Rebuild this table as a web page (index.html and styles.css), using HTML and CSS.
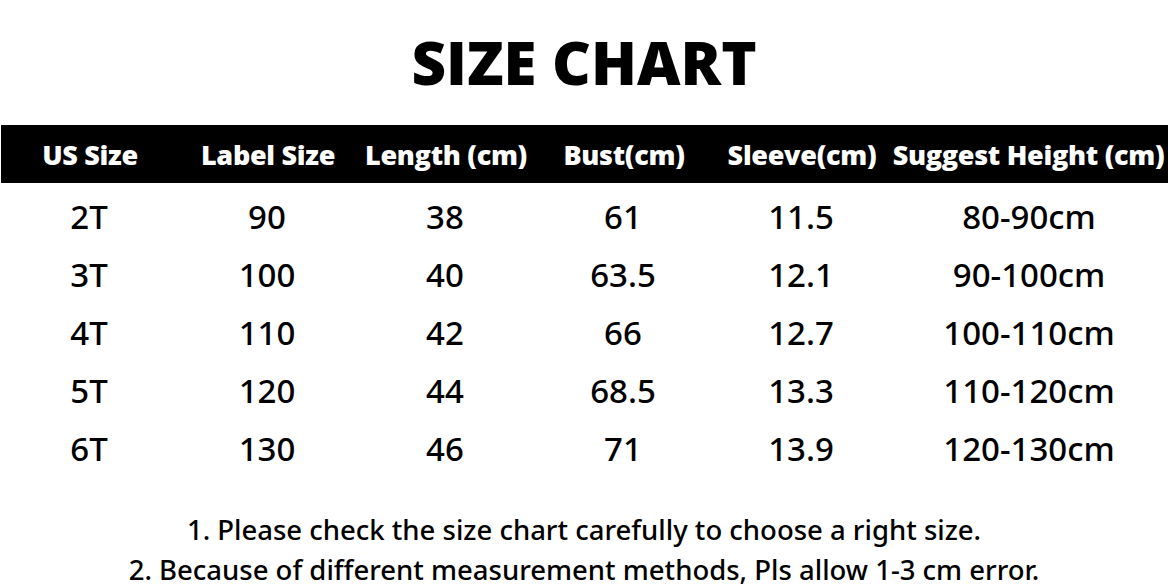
FILE: index.html
```html
<!DOCTYPE html>
<html>
<head>
<meta charset="utf-8">
<link rel="stylesheet" href="styles.css">
</head>
<body>
<div class="page">
  <h1 class="title">SIZE CHART</h1>
  <div class="table">
    <div class="row head">
      <div>US Size</div><div>Label Size</div><div>Length (cm)</div><div>Bust(cm)</div><div>Sleeve(cm)</div><div>Suggest Height (cm)</div>
    </div>
    <div class="body">
      <div class="row"><div>2T</div><div>90</div><div>38</div><div>61</div><div>11.5</div><div>80-90cm</div></div>
      <div class="row"><div>3T</div><div>100</div><div>40</div><div>63.5</div><div>12.1</div><div>90-100cm</div></div>
      <div class="row"><div>4T</div><div>110</div><div>42</div><div>66</div><div>12.7</div><div>100-110cm</div></div>
      <div class="row"><div>5T</div><div>120</div><div>44</div><div>68.5</div><div>13.3</div><div>110-120cm</div></div>
      <div class="row"><div>6T</div><div>130</div><div>46</div><div>71</div><div>13.9</div><div>120-130cm</div></div>
    </div>
  </div>
  <div class="notes">
    <p>1. Please check the size chart carefully to choose a right size.</p>
    <p>2. Because of different measurement methods, Pls allow 1-3 cm error.</p>
  </div>
</div>
</body>
</html>
```

FILE: styles.css
```css
html, body {
  margin: 0;
  padding: 0;
  background: #fff;
}
.page {
  width: 1168px;
  height: 585px;
  overflow: hidden;
  font-family: "Noto Sans", "Open Sans", sans-serif;
  color: #000;
}
.title {
  margin: 0;
  height: 125px;
  display: flex;
  align-items: center;
  justify-content: center;
  font-family: "Open Sans", sans-serif;
  font-weight: 800;
  font-size: 60px;
  line-height: 1;
  padding-bottom: 2px;
  box-sizing: border-box;
}
.row {
  display: grid;
  grid-template-columns: repeat(5, 178px) 1fr;
  height: 58px;
  align-items: center;
  text-align: center;
}
.row.head {
  background: #000;
  color: #fff;
  margin-left: 1px;
  font-family: "Open Sans", sans-serif;
  font-weight: 800;
  font-size: 27px;
  letter-spacing: -0.3px;
  white-space: nowrap;
}
.row.head > div:last-child {
  padding-right: 2px;
}
.body {
  padding-top: 4px;
}
.body .row {
  font-size: 33px;
  font-weight: 500;
}
.notes {
  margin-top: 38px;
  text-align: center;
  font-size: 27.5px;
  font-weight: 500;
  display: flex;
  flex-direction: column;
  gap: 10px;
}
.notes p {
  margin: 0;
  line-height: 30px;
  white-space: nowrap;
}
```
